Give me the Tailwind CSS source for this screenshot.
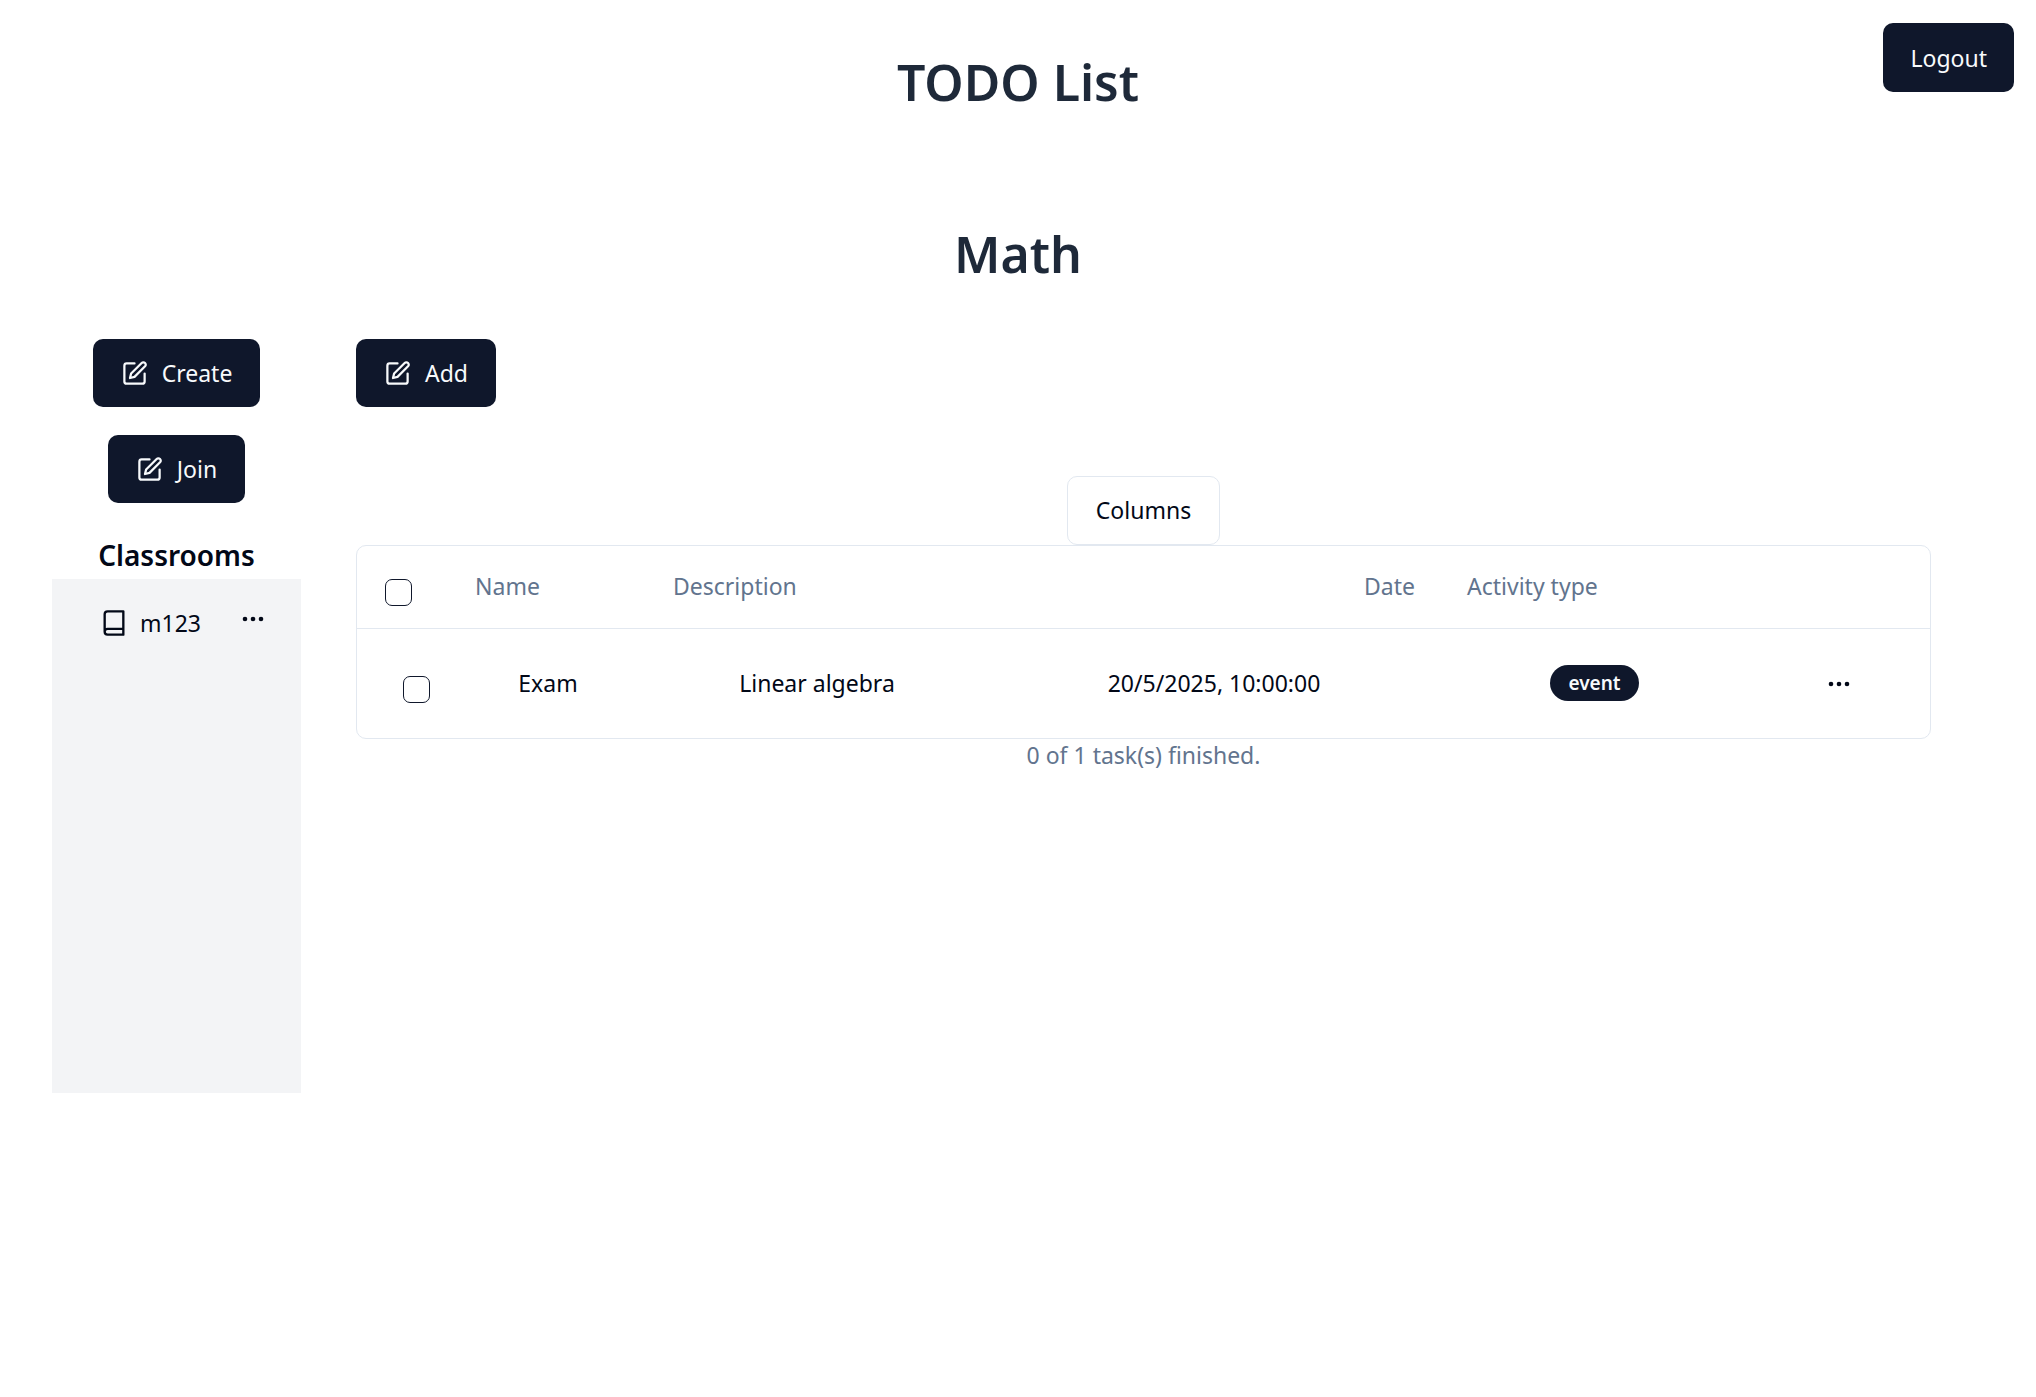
<!DOCTYPE html>
<html lang="en">
<head>
<meta charset="utf-8">
<title>TODO List</title>
<script src="https://cdn.jsdelivr.net/npm/@tailwindcss/browser@4"></script>
</head>
<body class="min-h-screen bg-white font-['Noto_Sans',sans-serif] text-[23px] leading-8 text-[#020817]">
<svg class="hidden" aria-hidden="true">
  <symbol id="pencil" viewBox="0 0 24 24"><g fill="none" stroke="currentColor" stroke-width="2" stroke-linecap="round" stroke-linejoin="round"><path d="M12 3H5a2 2 0 0 0-2 2v14a2 2 0 0 0 2 2h14a2 2 0 0 0 2-2v-7"/><path d="M18.375 2.625a2.121 2.121 0 1 1 3 3L12 15l-4 1 1-4Z"/></g></symbol>
  <symbol id="book" viewBox="0 0 24 24"><path fill="none" stroke="currentColor" stroke-width="2" stroke-linecap="round" stroke-linejoin="round" d="M4 19.5v-15A2.5 2.5 0 0 1 6.5 2H20v20H6.5a2.5 2.5 0 0 1 0-5H20"/></symbol>
  <symbol id="dots" viewBox="0 0 24 8"><g fill="currentColor"><circle cx="4" cy="4" r="2.3"/><circle cx="12" cy="4" r="2.3"/><circle cx="20" cy="4" r="2.3"/></g></symbol>
</svg>
<header class="relative pt-[50px]">
  <h1 class="text-center text-[50px] leading-16 font-semibold text-gray-800">TODO List</h1>
  <button class="absolute top-[23px] right-[22px] h-[69px] rounded-[10px] bg-slate-900 px-[27px] text-slate-50">Logout</button>
</header>
<h2 class="mt-[108px] text-center text-[50px] leading-16 font-semibold text-gray-800">Math</h2>
<div class="mt-[53px] flex gap-[55px] pr-[105px] pl-[52px]">
  <aside class="flex w-[249px] shrink-0 flex-col items-center">
    <button class="flex h-[68px] items-center gap-[14px] rounded-[10px] bg-slate-900 px-7 text-slate-50"><svg class="size-[27px]"><use href="#pencil"/></svg>Create</button>
    <button class="mt-7 flex h-[68px] items-center gap-[14px] rounded-[10px] bg-slate-900 px-7 text-slate-50"><svg class="size-[27px]"><use href="#pencil"/></svg>Join</button>
    <h3 class="mt-8 mb-1 text-[28px] leading-10 font-semibold">Classrooms</h3>
    <ul class="h-[514px] w-full bg-gray-100 pt-7">
      <li class="flex items-start pr-9 pl-12">
        <a href="#" class="flex items-center gap-3"><svg class="size-7"><use href="#book"/></svg>m123</a>
        <button class="mt-2 ml-auto" aria-label="Classroom options"><svg class="h-2 w-6"><use href="#dots"/></svg></button>
      </li>
    </ul>
  </aside>
  <main class="flex min-w-0 flex-1 flex-col items-center">
    <button class="flex h-[68px] items-center gap-[14px] self-start rounded-[10px] bg-slate-900 px-7 text-slate-50"><svg class="size-[27px]"><use href="#pencil"/></svg>Add</button>
    <button class="mt-[69px] h-[69px] rounded-[10px] border border-slate-200 px-7 pb-[2px]">Columns</button>
    <div class="w-full rounded-[10px] border border-slate-200">
      <table class="w-full table-fixed">
        <colgroup><col class="w-[92px]"><col class="w-[198px]"><col class="w-[340px]"><col class="w-[454px]"><col class="w-[307px]"><col class="w-[182px]"></colgroup>
        <thead>
          <tr class="h-[82px] border-b border-slate-200 text-left text-slate-500">
            <th class="pt-3 pl-7"><input type="checkbox" aria-label="Select all" class="block size-[27px] appearance-none rounded-[7px] border border-slate-900"></th>
            <th class="px-[26px] pb-[2px] font-normal">Name</th>
            <th class="px-[26px] pb-[2px] font-normal">Description</th>
            <th class="px-[26px] pb-[2px] text-right font-normal">Date</th>
            <th class="px-[26px] pb-[2px] font-normal">Activity type</th>
            <td></td>
          </tr>
        </thead>
        <tbody>
          <tr class="h-[110px] text-center">
            <td class="pt-3 pl-[26px]"><input type="checkbox" aria-label="Select Exam" class="mx-auto block size-[27px] appearance-none rounded-[7px] border border-slate-900"></td>
            <td>Exam</td>
            <td>Linear algebra</td>
            <td>20/5/2025, 10:00:00</td>
            <td class="pb-[2px]"><span class="inline-block h-9 rounded-full bg-slate-900 px-[18px] align-middle text-[19px] leading-9 font-semibold text-slate-50">event</span></td>
            <td class="pb-1"><button class="align-middle" aria-label="Task options"><svg class="h-2 w-6"><use href="#dots"/></svg></button></td>
          </tr>
        </tbody>
      </table>
    </div>
    <p class="text-slate-500">0 of 1 task(s) finished.</p>
  </main>
</div>
</body>
</html>
